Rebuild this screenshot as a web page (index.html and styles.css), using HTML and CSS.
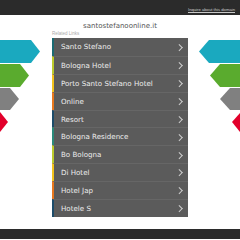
FILE: index.html
```html
<!DOCTYPE html>
<html lang="en">

<head>
    <meta charset="UTF-8">
    <meta name="viewport" content="width=device-width, initial-scale=1.0">
    <title>santostefanoonline.it</title>
    <link rel="stylesheet" href="styles.css">
</head>

<body>
    <div class="topbar">
        <a class="inquire" href="#">Inquire about this domain</a>
    </div>

    <h1 class="domain">santostefanoonline.it</h1>

    <div class="content">
        <div class="related">Related Links</div>

        <div class="side side-left">
            <svg width="52" height="100" viewBox="0 0 52 100">
                <polygon points="0,2 31,2 40,13.5 31,25 0,25" fill="#1aa9bf" />
                <polygon points="0,26 20,26 29,37.5 20,49 0,49" fill="#5aab2e" />
                <polygon points="0,50 10,50 19,61 10,72 0,72" fill="#808080" />
                <polygon points="0,74 8,84 0,94" fill="#e2002b" />
            </svg>
        </div>

        <ul class="links">
            <li class="c1"><a href="#">Santo Stefano</a></li>
            <li class="c2"><a href="#">Bologna Hotel</a></li>
            <li class="c3"><a href="#">Porto Santo Stefano Hotel</a></li>
            <li class="c4"><a href="#">Online</a></li>
            <li class="c5"><a href="#">Resort</a></li>
            <li class="c6"><a href="#">Bologna Residence</a></li>
            <li class="c2"><a href="#">Bo Bologna</a></li>
            <li class="c3"><a href="#">Di Hotel</a></li>
            <li class="c4"><a href="#">Hotel Jap</a></li>
            <li class="c5"><a href="#">Hotele S</a></li>
        </ul>

        <div class="side side-right">
            <svg width="52" height="100" viewBox="0 0 52 100">
                <polygon points="52,2 21,2 11,13.5 21,25 52,25" fill="#1aa9bf" />
                <polygon points="52,26 32,26 22,37.5 32,49 52,49" fill="#5aab2e" />
                <polygon points="52,50 42,50 32,61 42,72 52,72" fill="#808080" />
                <polygon points="52,75 44,84 52,94" fill="#e2002b" />
            </svg>
        </div>
    </div>

    <div class="footer"></div>
</body>

</html>
```

FILE: styles.css
```css
body {
    margin: 0;
    padding: 0;
    background-color: #fff;
    font-family: "DejaVu Sans", sans-serif;
}

.topbar {
    height: 15px;
    background-color: #2b2b2b;
    display: flex;
    justify-content: flex-end;
    align-items: center;
    padding: 0 5px;
    padding-top: 4px;
    box-sizing: border-box;
}

.inquire {
    font-family: "Liberation Sans", Arial, sans-serif;
    font-size: 4.2px;
    color: #c8c8c8;
    text-decoration: underline;
}

.domain {
    margin: 6px 0 0;
    font-size: 7px;
    font-weight: normal;
    line-height: 10px;
    color: #555;
    text-align: center;
}

.content {
    display: grid;
    grid-template-columns: 52px 136px 52px;
    grid-template-areas:
        ". label ."
        "left list right";
    margin-top: 0;
}

.related {
    grid-area: label;
    font-family: "Liberation Sans", Arial, sans-serif;
    font-size: 4.5px;
    line-height: 5px;
    color: #aaa;
    margin-bottom: 2px;
}

.side-left {
    grid-area: left;
}

.side-right {
    grid-area: right;
}

.side svg {
    display: block;
}

.links {
    grid-area: list;
    list-style: none;
    margin: 0;
    padding: 0;
    background-color: #5b5b5b;
}

.links li {
    height: 17.9px;
    border-left: 2px solid #1b6b73;
    border-top: 1px solid #666;
    box-sizing: border-box;
}

.links li:first-child {
    border-top: none;
}

.links a {
    display: flex;
    align-items: center;
    justify-content: space-between;
    height: 100%;
    padding: 0 7px 0 7px;
    font-size: 7.1px;
    color: #ededed;
    text-decoration: none;
}

/* thin chevron at the end of each row */
.links a::after {
    content: "";
    width: 3.5px;
    height: 3.5px;
    border-top: 0.8px solid #d0d0d0;
    border-right: 0.8px solid #d0d0d0;
    transform: rotate(45deg);
}

.c1 { border-left-color: #1b6b73 !important; }
.c2 { border-left-color: #bccb2c !important; }
.c3 { border-left-color: #f2c31c !important; }
.c4 { border-left-color: #e8781e !important; }
.c5 { border-left-color: #1d4c6a !important; }
.c6 { border-left-color: #2b8a7a !important; }

.footer {
    height: 10px;
    margin-top: 12px;
    background-color: #2b2b2b;
}
```
